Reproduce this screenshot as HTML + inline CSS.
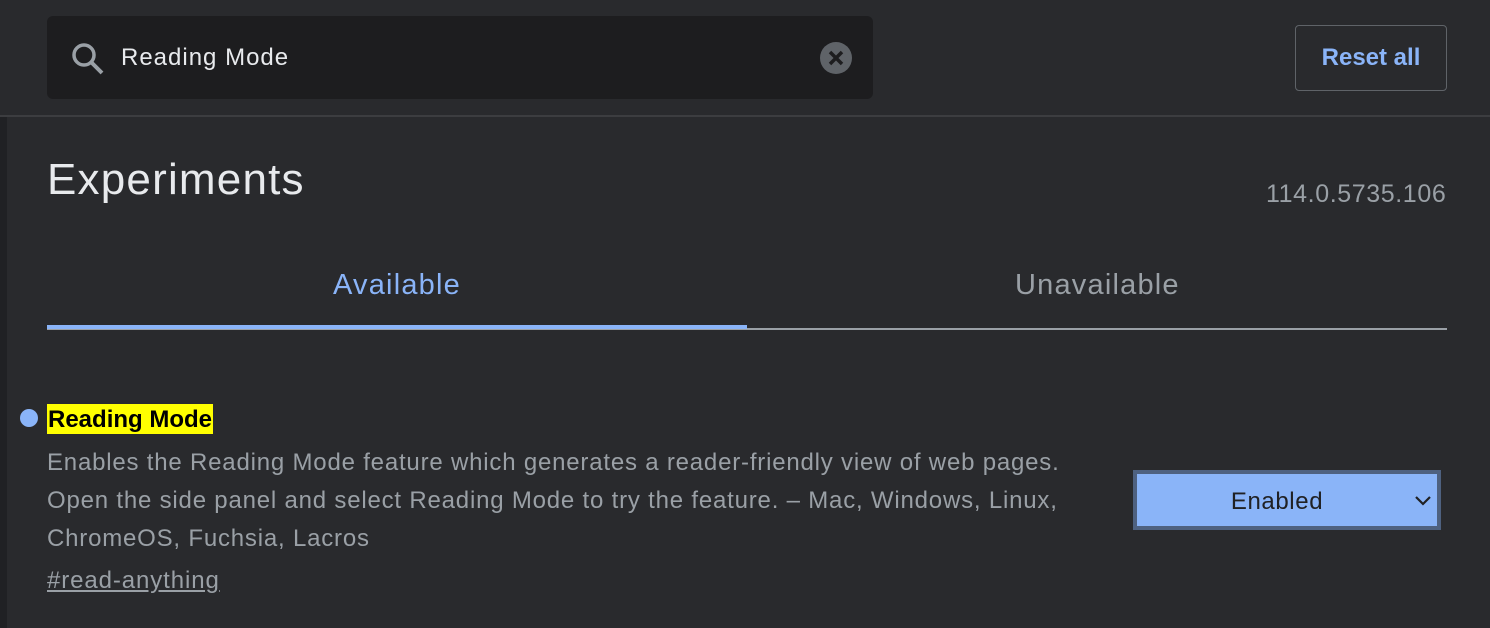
<!DOCTYPE html>
<html><head><style>
html,body{margin:0;padding:0;width:1490px;height:628px;overflow:hidden;background:#292a2d;font-family:"Liberation Sans",sans-serif;}
.hdr{position:absolute;left:0;top:0;width:1490px;height:115px;background:#292a2d;border-bottom:2px solid #3c3d40;}
.search{position:absolute;left:47px;top:16px;width:826px;height:83px;background:#1d1d1f;border-radius:6px;}
.search .t{position:absolute;left:74px;top:28px;font-size:24px;color:#e8eaed;letter-spacing:1px;}
.reset{position:absolute;left:1295px;top:25px;width:152px;height:66px;border:1px solid #5f6368;border-radius:4px;box-sizing:border-box;color:#8ab4f8;font-size:24px;font-weight:bold;line-height:64px;text-align:center;}
.strip{position:absolute;left:0;top:117px;width:7px;height:511px;background:#202124;}
.abs{position:absolute;white-space:nowrap;}
</style></head><body>
<div class="hdr">
 <div class="search">
  <svg style="position:absolute;left:22px;top:24px" width="38" height="38" viewBox="0 0 38 38"><circle cx="15" cy="15" r="10" fill="none" stroke="#9aa0a6" stroke-width="3.5"/><line x1="22" y1="22" x2="33" y2="33" stroke="#9aa0a6" stroke-width="4"/></svg>
  <div class="t">Reading Mode</div>
  <svg style="position:absolute;left:772px;top:25px" width="34" height="34" viewBox="0 0 34 34"><circle cx="17" cy="17" r="16" fill="#5f6368"/><path d="M11 11L23 23M23 11L11 23" stroke="#1d1d1f" stroke-width="3.5"/></svg>
 </div>
 <div class="reset">Reset all</div>
</div>
<div class="strip"></div>
<div class="abs" style="left:47px;top:155px;font-size:44px;color:#e8eaed;letter-spacing:1.2px;">Experiments</div>
<div class="abs" style="left:1266px;top:180px;font-size:25px;color:#9aa0a6;letter-spacing:0.6px;">114.0.5735.106</div>
<div class="abs" style="left:333px;top:269px;font-size:29px;color:#8ab4f8;letter-spacing:1.2px;">Available</div>
<div class="abs" style="left:1015px;top:269px;font-size:29px;color:#9aa0a6;letter-spacing:1.2px;">Unavailable</div>
<div class="abs" style="left:47px;top:328px;width:1400px;height:2px;background:#9aa0a6;"></div>
<div class="abs" style="left:47px;top:325px;width:700px;height:4px;background:#8ab4f8;"></div>
<div class="abs" style="left:20px;top:409px;width:18px;height:18px;border-radius:50%;background:#8ab4f8;"></div>
<div class="abs" style="left:47px;top:404px;height:30px;padding:0 1px;background:#ffff00;color:#000;font-size:24px;font-weight:bold;line-height:31px;">Reading Mode</div>
<div class="abs" style="left:47px;top:444px;font-size:24px;line-height:38px;color:#9aa0a6;letter-spacing:0.8px;">Enables the Reading Mode feature which generates a reader-friendly view of web pages.<br>Open the side panel and select Reading Mode to try the feature. – Mac, Windows, Linux,<br>ChromeOS, Fuchsia, Lacros</div>
<div class="abs" style="left:47px;top:567px;font-size:24px;color:#9aa0a6;text-decoration:underline;letter-spacing:0.9px;">#read-anything</div>
<div class="abs" style="left:1133px;top:470px;width:308px;height:60px;box-sizing:border-box;border:4px solid #4e6180;background:#8ab4f8;">
 <div style="position:absolute;left:0;width:280px;text-align:center;top:14px;font-size:24px;color:#202124;letter-spacing:0.6px;">Enabled</div>
 <svg style="position:absolute;left:277px;top:20px" width="18" height="14" viewBox="0 0 18 14"><path d="M2 3L9 10L16 3" fill="none" stroke="#202124" stroke-width="2.2"/></svg>
</div>
</body></html>
